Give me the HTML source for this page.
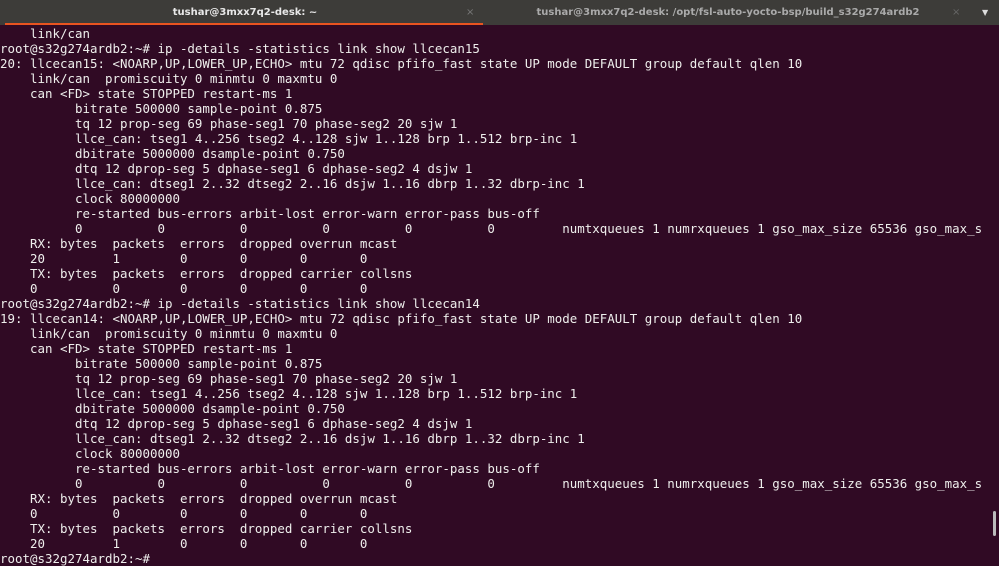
<!DOCTYPE html>
<html><head><meta charset="utf-8"><style>
html,body{margin:0;padding:0;width:999px;height:562px;overflow:hidden;background:#300a24}
.bar{position:absolute;left:0;top:0;width:999px;height:25px;background:#3d3c39}
.t{position:absolute;top:0;height:25px;line-height:25px;font-family:"DejaVu Sans","Liberation Sans",sans-serif;font-size:10px;font-weight:bold}
.ul{position:absolute;left:5px;top:23px;width:478px;height:2px;background:#e95420}
pre{position:absolute;left:0;top:26px;margin:0;font-family:"DejaVu Sans Mono","Liberation Mono",monospace;font-size:12.46px;line-height:15px;color:#eeeeec;white-space:pre}
.sb{position:absolute;left:993px;top:511px;width:3px;height:25px;background:#bbb;border-radius:2px}
</style></head><body>
<div class="bar"></div>
<div class="t" style="left:0;width:490px;text-align:center;color:#e8e8e8">tushar@3mxx7q2-desk: ~</div>
<div class="t" style="left:466px;color:#777;font-weight:normal">×</div>
<div class="t" style="left:500px;width:456px;text-align:center;color:#aaa">tushar@3mxx7q2-desk: /opt/fsl-auto-yocto-bsp/build_s32g274ardb2</div>
<div class="t" style="left:952px;color:#666;font-weight:normal">×</div>
<div class="t" style="left:982px;color:#ddd;font-size:8px">▼</div>
<div class="ul"></div>
<pre>    link/can
root@s32g274ardb2:~# ip -details -statistics link show llcecan15
20: llcecan15: &lt;NOARP,UP,LOWER_UP,ECHO&gt; mtu 72 qdisc pfifo_fast state UP mode DEFAULT group default qlen 10
    link/can  promiscuity 0 minmtu 0 maxmtu 0
    can &lt;FD&gt; state STOPPED restart-ms 1
          bitrate 500000 sample-point 0.875
          tq 12 prop-seg 69 phase-seg1 70 phase-seg2 20 sjw 1
          llce_can: tseg1 4..256 tseg2 4..128 sjw 1..128 brp 1..512 brp-inc 1
          dbitrate 5000000 dsample-point 0.750
          dtq 12 dprop-seg 5 dphase-seg1 6 dphase-seg2 4 dsjw 1
          llce_can: dtseg1 2..32 dtseg2 2..16 dsjw 1..16 dbrp 1..32 dbrp-inc 1
          clock 80000000
          re-started bus-errors arbit-lost error-warn error-pass bus-off
          0          0          0          0          0          0         numtxqueues 1 numrxqueues 1 gso_max_size 65536 gso_max_s
    RX: bytes  packets  errors  dropped overrun mcast
    20         1        0       0       0       0
    TX: bytes  packets  errors  dropped carrier collsns
    0          0        0       0       0       0
root@s32g274ardb2:~# ip -details -statistics link show llcecan14
19: llcecan14: &lt;NOARP,UP,LOWER_UP,ECHO&gt; mtu 72 qdisc pfifo_fast state UP mode DEFAULT group default qlen 10
    link/can  promiscuity 0 minmtu 0 maxmtu 0
    can &lt;FD&gt; state STOPPED restart-ms 1
          bitrate 500000 sample-point 0.875
          tq 12 prop-seg 69 phase-seg1 70 phase-seg2 20 sjw 1
          llce_can: tseg1 4..256 tseg2 4..128 sjw 1..128 brp 1..512 brp-inc 1
          dbitrate 5000000 dsample-point 0.750
          dtq 12 dprop-seg 5 dphase-seg1 6 dphase-seg2 4 dsjw 1
          llce_can: dtseg1 2..32 dtseg2 2..16 dsjw 1..16 dbrp 1..32 dbrp-inc 1
          clock 80000000
          re-started bus-errors arbit-lost error-warn error-pass bus-off
          0          0          0          0          0          0         numtxqueues 1 numrxqueues 1 gso_max_size 65536 gso_max_s
    RX: bytes  packets  errors  dropped overrun mcast
    0          0        0       0       0       0
    TX: bytes  packets  errors  dropped carrier collsns
    20         1        0       0       0       0
root@s32g274ardb2:~# </pre>
<div class="sb"></div>
</body></html>
